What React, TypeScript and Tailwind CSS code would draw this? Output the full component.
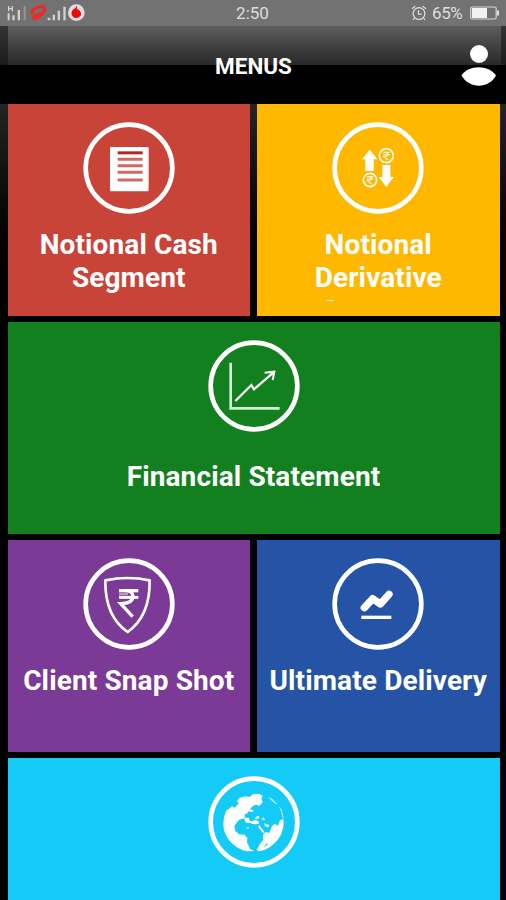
import type { ReactNode } from "react";
import { clsx } from "clsx";

type Tile = {
  title: string;
  color: string;
  wide?: boolean;
  viewBox: string;
  cx: number;
  cy: number;
  icon: ReactNode;
};

const tiles: Tile[] = [
  {
    title: "Notional Cash Segment",
    color: "bg-[#c94438]",
    viewBox: "38 36 276 276",
    cx: 176,
    cy: 174,
    icon: (
      <>
        <rect x="119" y="111" width="116" height="133" rx="4" fill="#fff" />
        <path d="M142 128.500H217" stroke="#b5271d" strokeWidth="9" />
        <path d="M142 148H217M142 167H217M142 187H217M142 210H217" stroke="#cf6a62" strokeWidth="9" />
      </>
    ),
  },
  {
    title: "Notional Derivative Segment",
    color: "bg-[#ffb800]",
    viewBox: "35 36 276 276",
    cx: 173,
    cy: 174,
    icon: (
      <>
        <path d="M148 119L171 148H160V183H135V148H125Z" fill="#fff" />
        <path d="M198 231L175 201H186V165H210V201H220Z" fill="#fff" />
        <g fill="none" stroke="#fff" strokeWidth="5">
          <circle cx="198" cy="137" r="21" />
          <circle cx="149" cy="210" r="20" />
        </g>
        <g fill="none" stroke="#fff" strokeWidth="4" opacity="0.8">
          <path d="M189 127H208M189 134H208M194 127Q204 128 202 135Q200 140 191 140L203 150" />
          <path d="M140 200H159M140 207H159M145 200Q155 201 153 208Q151 213 142 213L154 223" />
        </g>
      </>
    ),
  },
  {
    title: "Financial Statement",
    color: "bg-[#138020]",
    wide: true,
    viewBox: "38 45 276 276",
    cx: 176,
    cy: 183,
    icon: (
      <g fill="none" stroke="#fff">
        <path d="M106 113V250H253" strokeWidth="8" stroke="#d0efd3" />
        <path d="M120 228L168 180L176 193L234 143" strokeWidth="7" />
        <path d="M208 143L237 140L232 165" strokeWidth="6" />
      </g>
    ),
  },
  {
    title: "Client Snap Shot",
    color: "bg-[#7b3a96]",
    viewBox: "38 40 276 276",
    cx: 176,
    cy: 178,
    icon: (
      <g fill="none" stroke="#fff">
        <path
          d="M105 107Q140 100 172 100Q205 100 238 107C239 175 220 228 172 262C122 228 104 175 105 107Z"
          strokeWidth="8"
          strokeLinejoin="round"
        />
        <path d="M146 138H204" strokeWidth="10" />
        <path d="M146 158H204" strokeWidth="9" />
        <path d="M166 138Q188 139 188 156Q187 176 151 177L187 216" strokeWidth="10" />
        <path d="M146 148H173" stroke="#b896c6" strokeWidth="7" />
      </g>
    ),
  },
  {
    title: "Ultimate Delivery",
    color: "bg-[#2554a7]",
    viewBox: "35 39 276 276",
    cx: 173,
    cy: 177,
    icon: (
      <g fill="none" stroke="#fff">
        <path d="M132 188L157 161L180 177L206 148" strokeWidth="22" strokeLinecap="round" strokeLinejoin="round" />
        <path d="M123 217H213" strokeWidth="10" />
      </g>
    ),
  },
  {
    title: "",
    color: "bg-[#14cbf7]",
    wide: true,
    viewBox: "37 48 276 276",
    cx: 175,
    cy: 186,
    icon: (
      <g fill="#fff">
        <path d="M92 152L110 138L117 144L130 128L124 124L131 114L150 109L162 111L171 103L190 101L201 108L197 117L201 126L192 137L180 134L171 139L162 148L174 150L170 157L158 154L154 161L147 163L148 172L141 176L130 179L123 188L116 199L119 213L130 223L147 224L155 234L154 247L163 267L176 273L155 274C121 268 86 238 83 196Q83 170 92 152Z" />
        <path d="M183 270L193 252L203 239L202 225L209 216L221 219L229 198L238 191L246 198L253 181L263 177C270 222 234 267 190 274Z" />
        <path d="M144 174L158 173L165 185L178 180L188 183L190 192L176 193L160 188L151 188Z" />
        <path d="M176 176L185 167L192 171L187 177ZM198 176L204 172L208 180L202 181ZM190 194L206 216L202 219L188 202Z" />
        <path d="M217 111L230 117L245 132L239 131L225 119Z" opacity="0.7" />
        <path d="M249 139L258 149L265 177L260 170L256 153Z" opacity="0.8" />
        <path d="M205 190L222 196L217 202L208 199ZM151 204L160 202L158 207Z" />
        <path d="M204 261L216 247L214 256Z" fill="#14cbf7" />
      </g>
    ),
  },
];

function StatusBar() {
  return (
    <div className="flex h-[26px] items-center justify-between bg-[#727272] text-[#dedede]">
      <svg width="90" height="26" viewBox="0 0 270 78" className="shrink-0">
        <g fill="#d2d2d2">
          <path d="M24 18h4v6h7v-6h4v16h-4v-6h-7v6h-4zM23 40h6v21h-6zM37 46h7v15h-7zM53 30h7v31h-7z" />
          <path d="M71 19h6v42h-6z" fill="#979797" />
          <path d="M143 53h8v8h-8zM158 44h7v17h-7zM173 32h7v29h-7zM190 20h7v41h-7z" />
        </g>
        <path
          d="M95 40C98 25 118 17 129 20C140 25 130 43 117 50C106 57 99 58 101 52C103 46 112 43 118 42"
          fill="none"
          stroke="#ef2921"
          strokeWidth="9"
          strokeLinecap="round"
          strokeLinejoin="round"
        />
        <circle cx="229" cy="38" r="25" fill="#dedede" />
        <path d="M232 18Q226 19 226 25C211 30 210 52 228 54C249 52 247 33 231 27Q230 21 232 18Z" fill="#ed0909" />
      </svg>
      <span className="translate-x-[2px] font-['Roboto'] text-[17px] leading-[26px]">2:50</span>
      <div className="flex w-[95px] items-center">
        <svg width="16" height="16" viewBox="0 0 15 15" fill="none" stroke="currentColor" strokeWidth="1.200" className="shrink-0">
          <circle cx="7.500" cy="8" r="5.500" />
          <path d="M1 3.500L4 1.200M11 1.200L14 3.500M7 5V8.500H10M3 12.500L2 14M12 12.500L13 14" />
        </svg>
        <span className="ml-[5px] w-[32px] font-['Roboto'] text-[17px] leading-[26px] tracking-[-0.400px]">65%</span>
        <svg width="30" height="14" viewBox="0 0 30 14" className="ml-[6px] shrink-0">
          <rect x="0.700" y="1" width="25.500" height="12" rx="1.500" fill="none" stroke="#d6d6d6" strokeWidth="1.200" />
          <rect x="2" y="2" width="15" height="10" fill="#f2f2f2" />
          <path d="M27 4.500h2v5h-2z" fill="#dedede" />
        </svg>
      </div>
    </div>
  );
}

function Header() {
  return (
    <header className="bg-black">
      <div className="h-[39px] bg-linear-to-b from-[#343434] to-[#1c1c1c] pr-[5px] pl-[8px]">
        <div className="h-full bg-linear-to-b from-[#5e5e5e] to-[#292929]" />
      </div>
      <div className="relative -mt-[39px] flex h-[78px] items-center justify-center pt-[3px]">
        <h1 className="pl-px font-['Roboto'] text-[22.500px] font-bold text-white">MENUS</h1>
        <svg width="36" height="42" viewBox="0 0 36 42" fill="#fff" className="absolute top-[18px] right-[9px]">
          <circle cx="18" cy="10" r="9" />
          <path d="M0.500 31.500C7 20.500 28 20.500 35 31.500C28 45 8 45 0.500 31.500Z" />
        </svg>
      </div>
    </header>
  );
}

function MenuTile({ tile }: { tile: Tile }) {
  return (
    <button
      className={clsx(
        "flex h-[211.500px] flex-col items-center overflow-hidden pt-[18px]",
        tile.color,
        tile.wide && "col-span-2"
      )}
    >
      <svg width="92" height="92" viewBox={tile.viewBox} className="shrink-0">
        <circle cx={tile.cx} cy={tile.cy} r="130" fill="none" stroke="#fff" strokeWidth="14" />
        {tile.icon}
      </svg>
      <span
        className={clsx(
          "max-h-[73px] overflow-hidden text-center font-['Roboto'] text-[28px] leading-[33px] font-bold tracking-[0.120px] text-white",
          tile.wide ? "mt-[28px]" : "mt-[14px]",
          tile.title.startsWith("Notional") && "w-[210px]"
        )}
      >
        {tile.title}
      </span>
    </button>
  );
}

export default function App() {
  return (
    <div className="h-[900px] w-[506px] overflow-hidden bg-black">
      <StatusBar />
      <Header />
      <main className="grid grid-cols-2 gap-x-[7px] gap-y-[6.500px] bg-linear-to-b from-[#232525] via-black via-25% to-black pr-[6.500px] pl-[7.500px]">
        {tiles.map((tile, i) => (
          <MenuTile key={i} tile={tile} />
        ))}
      </main>
    </div>
  );
}
